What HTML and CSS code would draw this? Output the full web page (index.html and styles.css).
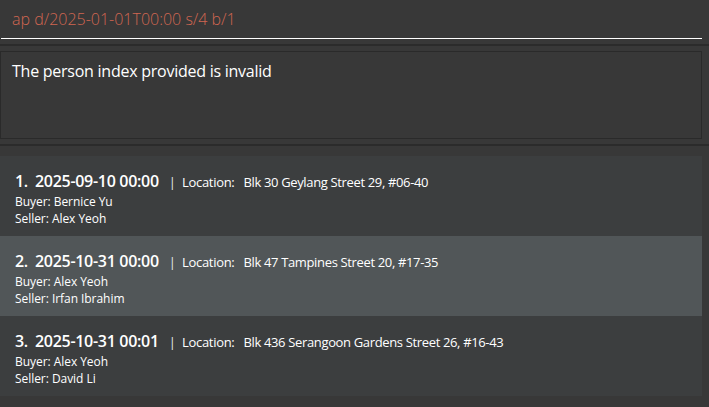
FILE: index.html
```html
<!DOCTYPE html>
<html>
<head>
<meta charset="utf-8">
<link rel="stylesheet" href="styles.css">
</head>
<body>
<div class="app">
  <div class="command-box">
    <div class="command-field error">ap d/2025-01-01T00:00 s/4 b/1</div>
  </div>
  <div class="divider"></div>
  <div class="result-box">
    <div class="result-text">The person index provided is invalid</div>
  </div>
  <div class="divider lower"></div>
  <div class="list">
    <div class="card">
      <div class="title"><span class="idx">1.</span><span class="date">2025-09-10 00:00</span><span class="sep">|</span><span class="loc-label">Location:</span><span class="loc">Blk 30 Geylang Street 29, #06-40</span></div>
      <div class="small">Buyer: Bernice Yu</div>
      <div class="small">Seller: Alex Yeoh</div>
    </div>
    <div class="card odd">
      <div class="title"><span class="idx">2.</span><span class="date">2025-10-31 00:00</span><span class="sep">|</span><span class="loc-label">Location:</span><span class="loc">Blk 47 Tampines Street 20, #17-35</span></div>
      <div class="small">Buyer: Alex Yeoh</div>
      <div class="small">Seller: Irfan Ibrahim</div>
    </div>
    <div class="card">
      <div class="title"><span class="idx">3.</span><span class="date">2025-10-31 00:01</span><span class="sep">|</span><span class="loc-label">Location:</span><span class="loc">Blk 436 Serangoon Gardens Street 26, #16-43</span></div>
      <div class="small">Buyer: Alex Yeoh</div>
      <div class="small">Seller: David Li</div>
    </div>
  </div>
</div>
</body>
</html>
```
FILE: styles.css
```css
html, body {
  margin: 0;
  padding: 0;
  background: #383838;
  width: 709px;
  height: 407px;
  overflow: hidden;
  font-family: "Open Sans", "Noto Sans", sans-serif;
  color: #ffffff;
}
.app {
  display: flex;
  flex-direction: column;
}
.command-box {
  padding: 0 7px 0 1px;
}
.command-field {
  height: 39px;
  box-sizing: border-box;
  border-bottom: 1px solid #ffffff;
  padding: 8px 0 0 11px;
  font-size: 16px;
  font-weight: 300;
  line-height: 22px;
  letter-spacing: 0;
}
.error { color: #d06651; }
.divider {
  height: 2px;
  background: #2b2b2b;
  margin: 5px 0 5px 0;
}
.divider.lower { margin-bottom: 10px; }
.result-box {
  margin-right: 7px;
  height: 88px;
  box-sizing: border-box;
  border: 1px solid #2a2a2a;
  padding: 8px 11px;
}
.result-text {
  font-size: 16px;
  line-height: 22px;
  color: #ffffff;
  letter-spacing: -0.25px;
}
.list {
  margin-right: 7px;
  background: #3c3e3f;
  display: flex;
  flex-direction: column;
}
.card {
  height: 80px;
  box-sizing: border-box;
  padding: 14px 15px 0;
  background: #3c3e3f;
}
.card.odd { background: #515658; }
.title {
  display: flex;
  align-items: baseline;
  height: 23px;
  white-space: nowrap;
}
.idx {
  font-size: 16px;
  font-weight: 600;
  width: 20px;
  letter-spacing: -0.3px;
}
.date {
  font-size: 16px;
  font-weight: 600;
  letter-spacing: -0.3px;
}
.sep {
  font-size: 13px;
  color: #e8e8e8;
  margin: 0 6px 0 10px;
}
.loc-label {
  font-size: 13px;
  margin-right: 9px;
  letter-spacing: -0.3px;
}
.loc {
  font-size: 13px;
  letter-spacing: -0.35px;
}
.small {
  font-size: 12px;
  line-height: 17px;
  letter-spacing: -0.05px;
}
```
